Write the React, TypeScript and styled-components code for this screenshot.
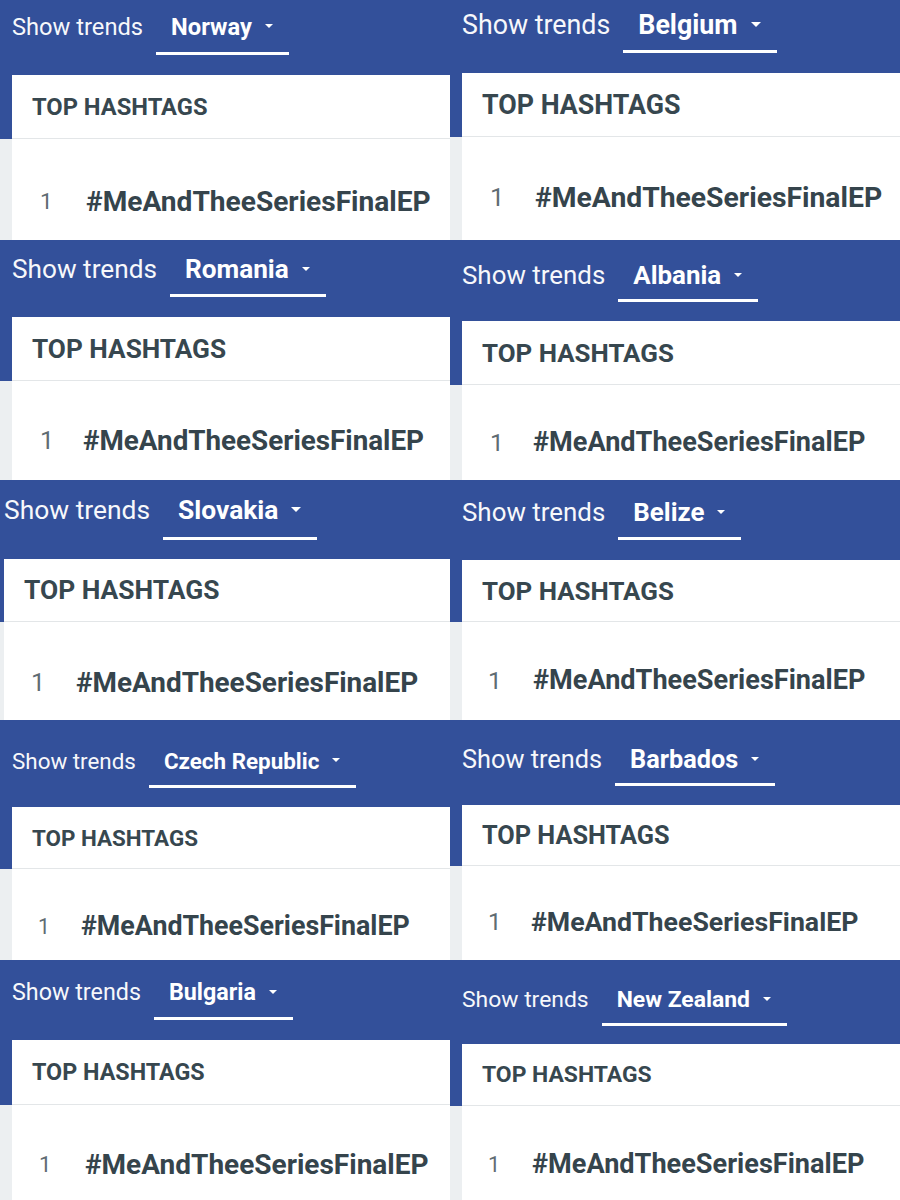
import React from 'react';
import styled, { createGlobalStyle } from 'styled-components';

const GlobalStyle = createGlobalStyle`
  html, body {
    margin: 0;
    padding: 0;
    background: #eceff1;
    font-family: Roboto, "Noto Sans", "Liberation Sans", sans-serif;
  }
`;

interface Shot {
  country: string;
  pad: number; // card inset from the left edge of the shot
  s: number; // header font size
  t: number; // hashtag font size
  textY: number; // centre of the "Show trends" line
  ulY: number; // centre of the tab underline
  cardTop: number;
  border: number; // bottom of card header, also where the blue stops
  rowY: number; // centre of the first ranking row
  numX: number;
  tagX: number;
}

const shots: Array<Shot> = [
  { country: 'Norway', pad: 12, s: 23.7, t: 28.1, textY: 27, ulY: 53.5, cardTop: 75, border: 139, rowY: 201, numX: 28, tagX: 74 },
  { country: 'Belgium', pad: 12, s: 26.8, t: 28.3, textY: 25.5, ulY: 51.5, cardTop: 73, border: 137, rowY: 197, numX: 28, tagX: 73 },
  { country: 'Romania', pad: 12, s: 26.2, t: 27.8, textY: 30, ulY: 56, cardTop: 77, border: 141, rowY: 200, numX: 28, tagX: 71 },
  { country: 'Albania', pad: 12, s: 25.9, t: 27.1, textY: 36, ulY: 61, cardTop: 81, border: 145, rowY: 202, numX: 28, tagX: 71 },
  { country: 'Slovakia', pad: 4, s: 26.4, t: 27.9, textY: 31, ulY: 58, cardTop: 79, border: 142, rowY: 202, numX: 27, tagX: 72 },
  { country: 'Belize', pad: 12, s: 25.9, t: 27.1, textY: 33, ulY: 59, cardTop: 80, border: 142, rowY: 200, numX: 26, tagX: 71 },
  { country: 'Czech Republic', pad: 12, s: 22.4, t: 26.8, textY: 41, ulY: 67, cardTop: 87, border: 149, rowY: 206, numX: 26, tagX: 69 },
  { country: 'Barbados', pad: 12, s: 25.3, t: 26.7, textY: 40, ulY: 65, cardTop: 85, border: 146, rowY: 202, numX: 26, tagX: 69 },
  { country: 'Bulgaria', pad: 12, s: 23.3, t: 28, textY: 33, ulY: 59, cardTop: 80, border: 145, rowY: 204, numX: 27, tagX: 73 },
  { country: 'New Zealand', pad: 12, s: 22.9, t: 27.1, textY: 40, ulY: 65, cardTop: 84, border: 146, rowY: 204, numX: 26, tagX: 70 },
];

const LINE = 1.2;

const Collage = styled.main`
  display: grid;
  grid-template-columns: 450px 450px;
  grid-auto-rows: 240px;
  width: 900px;
`;

const Shot = styled.section<{ $blue: number }>`
  height: 240px;
  overflow: hidden;
  display: flex;
  flex-direction: column;
  background: linear-gradient(to bottom, #33509a ${({ $blue }) => $blue}px, #eceff1 ${({ $blue }) => $blue}px);
`;

const Nav = styled.nav<{ $h: number; $top: number; $pad: number; $s: number }>`
  box-sizing: border-box;
  height: ${({ $h }) => $h}px;
  flex: none;
  display: flex;
  align-items: flex-start;
  padding: ${({ $top }) => $top}px 0 0 ${({ $pad }) => $pad}px;
  font-size: ${({ $s }) => $s}px;
  line-height: ${LINE};
  color: #fff;
  white-space: nowrap;
`;

const Label = styled.span`
  font-weight: 400;
  margin-right: 13px;
  opacity: 0.96;
`;

const Tab = styled.div<{ $under: number }>`
  display: flex;
  align-items: center;
  padding: 0 16px ${({ $under }) => $under}px 15px;
  border-bottom: 3px solid #fff;
  font-weight: 700;
`;

const Caret = styled.span<{ $s: number }>`
  width: 0;
  height: 0;
  margin: 0 0 ${({ $s }) => $s * 0.08}px 13px;
  border-left: ${({ $s }) => $s * 0.19}px solid transparent;
  border-right: ${({ $s }) => $s * 0.19}px solid transparent;
  border-top: ${({ $s }) => $s * 0.19}px solid #fff;
`;

const Card = styled.div<{ $pad: number }>`
  flex: 1;
  margin-left: ${({ $pad }) => $pad}px;
  background: #fff;
  display: flex;
  flex-direction: column;
  color: #37474f;
`;

const CardHead = styled.header<{ $h: number; $s: number }>`
  box-sizing: border-box;
  height: ${({ $h }) => $h}px;
  flex: none;
  display: flex;
  align-items: center;
  padding-left: 20px;
  border-bottom: 1px solid #e3e6e8;
  font-size: ${({ $s }) => $s}px;
  font-weight: 700;
  white-space: nowrap;
`;

const Row = styled.div<{ $h: number }>`
  height: ${({ $h }) => $h}px;
  flex: none;
  display: flex;
  align-items: center;
  white-space: nowrap;
`;

const Rank = styled.span<{ $x: number; $w: number; $s: number }>`
  box-sizing: border-box;
  width: ${({ $w }) => $w}px;
  padding-left: ${({ $x }) => $x}px;
  font-size: ${({ $s }) => $s}px;
  font-weight: 400;
  color: #5f6c73;
`;

const Tag = styled.span<{ $t: number }>`
  font-size: ${({ $t }) => $t}px;
  font-weight: 700;
  color: #35444c;
`;

const TrendShot = ({ shot }: { shot: Shot }) => {
  const { country, pad, s, t, textY, ulY, cardTop, border, rowY, numX, tagX } = shot;
  const lineH = s * LINE;
  const top = textY - lineH / 2;
  const under = ulY - 1.5 - textY - lineH / 2;

  return (
    <Shot $blue={border}>
      <Nav $h={cardTop} $top={top} $pad={pad} $s={s}>
        <Label>Show trends</Label>
        <Tab $under={under}>
          {country}
          <Caret $s={s} />
        </Tab>
      </Nav>
      <Card $pad={pad}>
        <CardHead $h={border - cardTop} $s={s}>
          TOP HASHTAGS
        </CardHead>
        <Row $h={(rowY - border) * 2}>
          <Rank $x={numX} $w={tagX} $s={s * 0.95}>
            1
          </Rank>
          <Tag $t={t}>#MeAndTheeSeriesFinalEP</Tag>
        </Row>
      </Card>
    </Shot>
  );
};

const App: React.FC = () => {
  return (
    <>
      <GlobalStyle />
      <Collage>
        {shots.map((shot) => (
          <TrendShot key={shot.country} shot={shot} />
        ))}
      </Collage>
    </>
  );
};

export default App;
